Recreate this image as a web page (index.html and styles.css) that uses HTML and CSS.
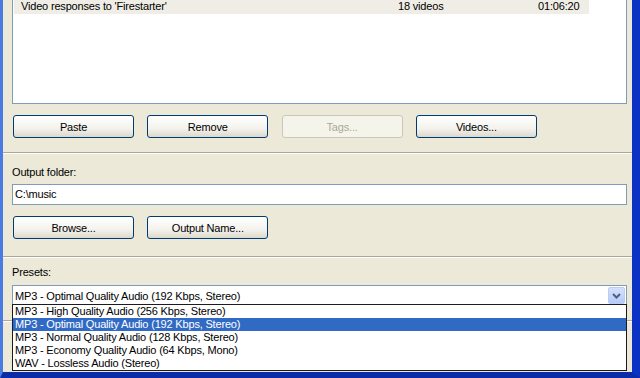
FILE: index.html
```html
<!DOCTYPE html>
<html>

<head>
    <meta charset="utf-8">
    <meta name="viewport" content="width=device-width,initial-scale=1.0">
    <title>Converter</title>
    <link rel="stylesheet" href="styles.css">
</head>

<body>
    <div id="window">
        <div class="content">
            <div class="list">
                <div class="row">
                    <span>Video responses to 'Firestarter'</span>
                    <span>18 videos</span>
                    <span>01:06:20</span>
                </div>
            </div>
            <div class="buttons">
                <button class="btn">Paste</button>
                <button class="btn">Remove</button>
                <button class="btn" disabled>Tags...</button>
                <button class="btn">Videos...</button>
            </div>

            <div class="sep sep-videos"></div>

            <div class="label label-folder">Output folder:</div>
            <div class="field">C:\music</div>
            <div class="buttons">
                <button class="btn">Browse...</button>
                <button class="btn">Output Name...</button>
            </div>

            <div class="sep sep-folder"></div>

            <div class="label label-presets">Presets:</div>
            <div class="combo-wrap">
                <div class="combo">
                    <span class="combo-text">MP3 - Optimal Quality Audio (192 Kbps, Stereo)</span>
                    <span class="combo-arrow">
                        <svg width="9" height="6" viewBox="0 0 9 6">
                            <path d="M1 1 L4.5 4.5 L8 1" fill="none" stroke="#4d6185" stroke-width="2"/>
                        </svg>
                    </span>
                </div>
                <ul class="dropdown">
                    <li>MP3 - High Quality Audio (256 Kbps, Stereo)</li>
                    <li class="selected">MP3 - Optimal Quality Audio (192 Kbps, Stereo)</li>
                    <li>MP3 - Normal Quality Audio (128 Kbps, Stereo)</li>
                    <li>MP3 - Economy Quality Audio (64 Kbps, Mono)</li>
                    <li>WAV - Lossless Audio (Stereo)</li>
                </ul>
            </div>

            <div class="sep sep-presets"></div>
        </div>
    </div>
</body>

</html>
```

FILE: styles.css
```css
html,
body {
    margin: 0;
    padding: 0;
    height: 100%;
}

body {
    font-family: "Liberation Sans", Arial, sans-serif;
    font-size: 11px;
    letter-spacing: -0.18px;
    color: #000;
    overflow: hidden;
}

#window {
    width: 640px;
    height: 378px;
    box-sizing: border-box;
    background: #ece9d8;
    border-left: 3px solid #4a7be2;
    border-right: 8px solid #0b32c2;
    border-bottom: 6px solid #0a2ca8;
    overflow: hidden;
}

.content {
    padding: 0 5px 0 9px;
}

.list {
    margin-top: -2px;
    height: 106px;
    box-sizing: border-box;
    background: #fff;
    border: 1px solid #7f9db9;
    padding-left: 1px;
}

.row {
    display: grid;
    grid-template-columns: 377px 140px 1fr;
    width: 575px;
    height: 15px;
    line-height: 15px;
    box-sizing: border-box;
    padding-left: 7px;
    background: #efede5;
}

.buttons {
    display: flex;
    gap: 13.3px;
    margin-top: 11px;
    padding-left: 1px;
}

.field+.buttons {
    margin-top: 11px;
}

.btn {
    width: 121px;
    height: 23px;
    padding: 0;
    font-family: inherit;
    font-size: 11px;
    letter-spacing: inherit;
    color: #000;
    border: 1px solid #003c74;
    border-radius: 3px;
    background: linear-gradient(#ffffff, #f3f2ec 60%, #dcd8cc);
}

.btn[disabled] {
    color: #aca899;
    border-color: #c9c7ba;
    background: #f5f4ea;
}

.sep {
    margin: 14px -5px 0 -9px;
    border-top: 1px solid #aca899;
    border-bottom: 1px solid #fff;
}

.sep-folder {
    margin-top: 17px;
}

.label {
    line-height: 14px;
}

.label-folder {
    margin-top: 11px;
}

.label-presets {
    margin-top: 7px;
}

.field {
    margin-top: 5px;
    height: 21px;
    line-height: 19px;
    box-sizing: border-box;
    border: 1px solid #7f9db9;
    background: #fff;
    padding-left: 2px;
}

.combo-wrap {
    position: relative;
    margin-top: 6px;
}

.combo {
    display: flex;
    align-items: center;
    justify-content: space-between;
    height: 21px;
    box-sizing: border-box;
    border: 1px solid #7f9db9;
    background: #fff;
    padding: 0 1px 0 2px;
}

.combo-arrow {
    display: flex;
    align-items: center;
    justify-content: center;
    width: 17px;
    height: 17px;
    box-sizing: border-box;
    border: 1px solid #b9cdf6;
    border-radius: 2px;
    background: linear-gradient(#d4e1fc, #b7cbf7);
}

.dropdown {
    position: absolute;
    top: 19px;
    left: 0;
    right: 0;
    margin: 0;
    padding: 0;
    list-style: none;
    background: #fff;
    border: 1px solid #1c1c1c;
}

.dropdown li {
    height: 13px;
    line-height: 13px;
    padding-left: 2px;
}

.dropdown .selected {
    background: #316ac5;
    color: #fff;
}
```
